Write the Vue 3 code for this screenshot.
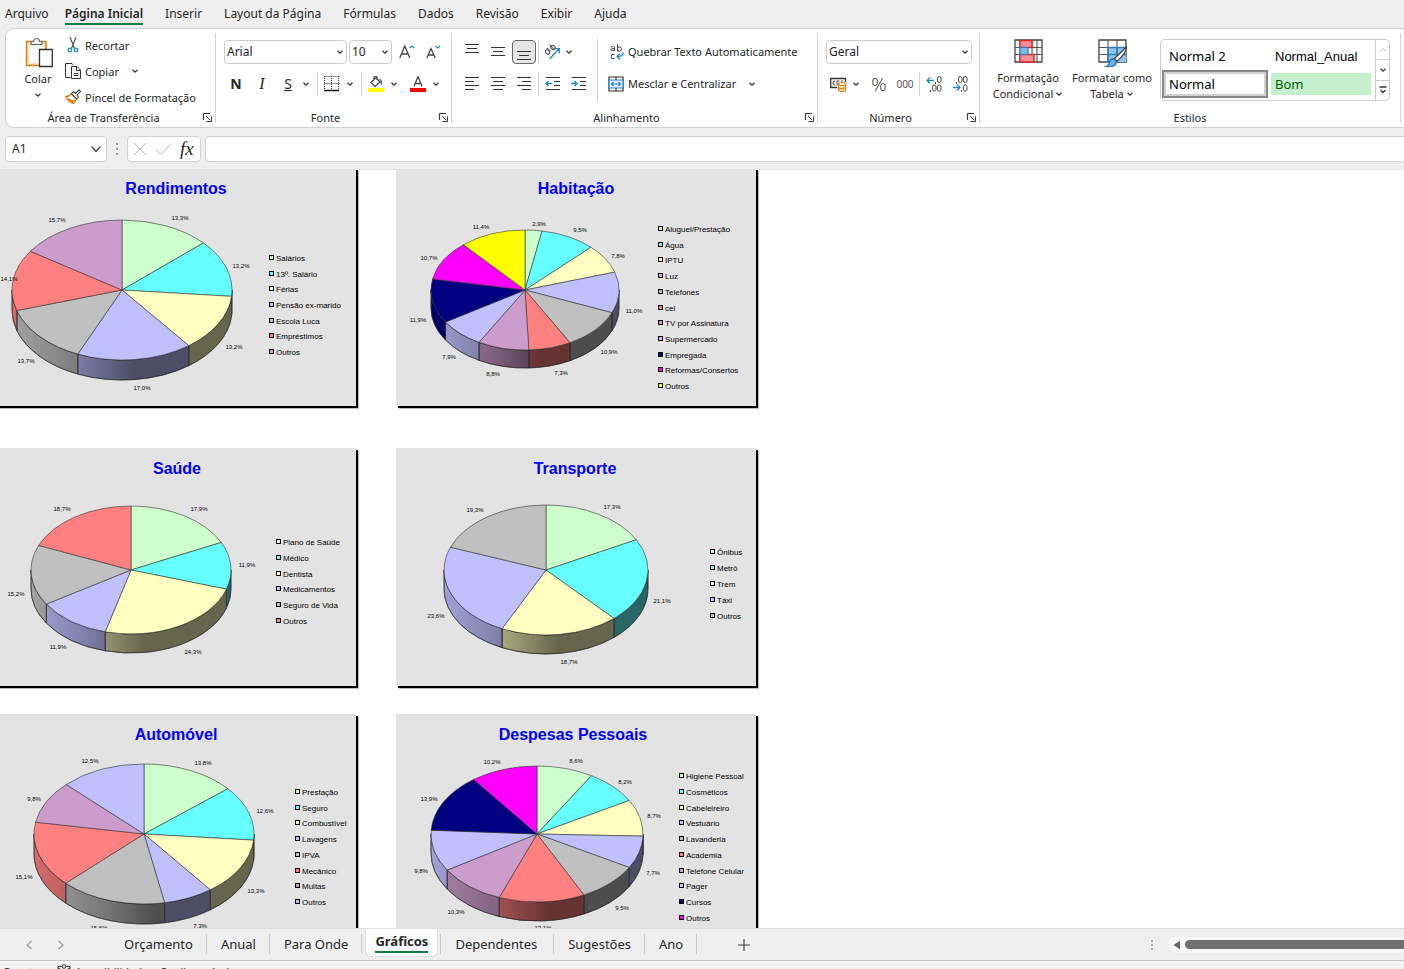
<script setup>
import { ref } from 'vue'

const menu = ['Arquivo', 'Página Inicial', 'Inserir', 'Layout da Página', 'Fórmulas', 'Dados', 'Revisão', 'Exibir', 'Ajuda']
const activeMenu = ref('Página Inicial')

const sheets = ['Orçamento', 'Anual', 'Para Onde', 'Gráficos', 'Dependentes', 'Sugestões', 'Ano']
const activeSheet = ref('Gráficos')

const fontName = ref('Arial')
const fontSize = ref('10')
const numberFormat = ref('Geral')
const cellRef = ref('A1')
const formula = ref('')

const GREEN = '#ccffcc'
const CYAN = '#66ffff'
const CREAM = '#ffffc0'
const LILAC = '#c0c0ff'
const GRAY = '#c0c0c0'
const RED = '#ff8080'
const PLUM = '#cc9ccc'
const NAVY = '#000080'
const PINK = '#ff00ff'
const YELLOW = '#ffff00'

// Slices: [name, percent, colour, label x, label y], in sheet coordinates.
const charts = [
  {
    id: 'rend', title: 'Rendimentos', x: -4, y: 168, tx: 176,
    cx: 122, cy: 290, rx: 110, ry: 70, depth: 20, lx: 269, ly: 258, lspan: 94,
    slices: [
      ['Salários', 13.3, GREEN, 180, 218], ['13º. Salário', 13.2, CYAN, 241, 266],
      ['Férias', 13.2, CREAM, 234, 347], ['Pensão ex-marido', 17.0, LILAC, 142, 388],
      ['Escola Luca', 13.7, GRAY, 26, 361], ['Empréstimos', 14.1, RED, 9, 279],
      ['Outros', 15.7, PLUM, 57, 220],
    ],
  },
  {
    id: 'hab', title: 'Habitação', x: 396, y: 168, tx: 576,
    cx: 525, cy: 290, rx: 94, ry: 60, depth: 18, lx: 658, ly: 229, lspan: 157,
    slices: [
      ['Aluguel/Prestação', 2.9, GREEN, 539, 224], ['Água', 9.5, CYAN, 580, 230],
      ['IPTU', 7.8, CREAM, 618, 256], ['Luz', 11.0, LILAC, 634, 311],
      ['Telefones', 10.9, GRAY, 609, 352], ['cel', 7.3, RED, 561, 373],
      ['TV por Assinatura', 8.8, PLUM, 493, 374], ['Supermercado', 7.9, LILAC, 449, 357],
      ['Empregada', 11.9, NAVY, 418, 320], ['Reformas/Consertos', 10.7, PINK, 429, 258],
      ['Outros', 11.4, YELLOW, 481, 227],
    ],
  },
  {
    id: 'sau', title: 'Saúde', x: -4, y: 448, tx: 177,
    cx: 131, cy: 570, rx: 100, ry: 64, depth: 19, lx: 276, ly: 542, lspan: 79,
    slices: [
      ['Plano de Saúde', 17.9, GREEN, 199, 509], ['Médico', 11.9, CYAN, 247, 565],
      ['Dentista', 24.3, CREAM, 193, 652], ['Medicamentos', 11.9, LILAC, 58, 647],
      ['Seguro de Vida', 15.2, GRAY, 16, 594], ['Outros', 18.7, RED, 62, 509],
    ],
  },
  {
    id: 'tra', title: 'Transporte', x: 396, y: 448, tx: 575,
    cx: 546, cy: 570, rx: 102, ry: 65, depth: 19, lx: 710, ly: 552, lspan: 64,
    slices: [
      ['Ônibus', 17.3, GREEN, 612, 507], ['Metrô', 21.1, CYAN, 662, 601],
      ['Trem', 18.7, CREAM, 569, 662], ['Táxi', 23.6, LILAC, 436, 616],
      ['Outros', 19.3, GRAY, 475, 510],
    ],
  },
  {
    id: 'aut', title: 'Automóvel', x: -4, y: 714, tx: 176,
    cx: 144, cy: 834, rx: 110, ry: 70, depth: 20, lx: 295, ly: 792, lspan: 110,
    slices: [
      ['Prestação', 13.8, GREEN, 203, 763], ['Seguro', 12.6, CYAN, 265, 811],
      ['Combustível', 13.3, CREAM, 256, 891], ['Lavagens', 7.3, LILAC, 200, 926],
      ['IPVA', 15.6, GRAY, 99, 928], ['Mecânico', 15.1, RED, 24, 877],
      ['Multas', 9.8, PLUM, 34, 799], ['Outros', 12.5, LILAC, 90, 761],
    ],
  },
  {
    id: 'des', title: 'Despesas Pessoais', x: 396, y: 714, tx: 573,
    cx: 537, cy: 834, rx: 106, ry: 68, depth: 19, lx: 679, ly: 776, lspan: 142,
    slices: [
      ['Higiene Pessoal', 8.6, GREEN, 576, 761], ['Cosméticos', 8.2, CYAN, 625, 782],
      ['Cabeleireiro', 8.7, CREAM, 654, 816], ['Vestuário', 7.7, LILAC, 653, 873],
      ['Lavanderia', 9.5, GRAY, 622, 908], ['Academia', 13.1, RED, 543, 928],
      ['Telefone Celular', 10.3, PLUM, 456, 912], ['Pager', 9.8, LILAC, 421, 871],
      ['Cursos', 13.9, NAVY, 429, 799], ['Outros', 10.2, PINK, 492, 762],
    ],
  },
]

function build(c) {
  const total = c.slices.reduce((s, d) => s + d[1], 0)
  const at = (a) => [c.cx + c.rx * Math.sin(a), c.cy - c.ry * Math.cos(a)]
  let acc = 0
  const parts = c.slices.map(([name, pct, fill, x, y], i) => {
    const a0 = (acc / total) * 2 * Math.PI
    acc += pct
    const a1 = (acc / total) * 2 * Math.PI
    const [x0, y0] = at(a0)
    const [x1, y1] = at(a1)
    const top = `M${c.cx} ${c.cy}L${x0} ${y0}A${c.rx} ${c.ry} 0 ${a1 - a0 > Math.PI ? 1 : 0} 1 ${x1} ${y1}Z`
    const w0 = Math.max(a0, Math.PI / 2)
    const w1 = Math.min(a1, Math.PI * 1.5)
    let wall = ''
    if (w1 > w0) {
      const [p, q] = at(w0)
      const [r, s] = at(w1)
      wall = `M${p} ${q}A${c.rx} ${c.ry} 0 0 1 ${r} ${s}V${s + c.depth}A${c.rx} ${c.ry} 0 0 0 ${p} ${q + c.depth}Z`
    }
    return {
      name, fill, x, y, top, wall,
      label: pct.toFixed(1).replace('.', ',') + '%',
      keyY: Math.round(c.ly + (c.lspan * i) / (c.slices.length - 1)),
    }
  })
  return { ...c, parts }
}
const rows = [[0, 1], [2, 3], [4, 5]].map((r) => r.map((i) => build(charts[i])))
</script>

<template>
  <div class="app">
    <svg class="defs" aria-hidden="true">
      <symbol id="chev" viewBox="0 0 8 8"><path d="M1.5 2.8L4 5.2L6.5 2.8" fill="none" stroke="#333" stroke-width="1.3" /></symbol>
      <symbol id="launch" viewBox="0 0 9 9"><path d="M.5 7V.5H7M3 3L7 7M8.500 3.500V8.500H3.500" fill="none" stroke="#333" /></symbol>
    </svg>

    <nav class="menu">
      <button v-for="m in menu" :key="m" type="button" :class="{ on: m === activeMenu }" @click="activeMenu = m">{{ m }}</button>
    </nav>

    <section class="ribbon">
      <div class="group clip">
        <div class="body">
          <button type="button" class="big paste">
            <svg width="30" height="32" viewBox="0 0 30 32">
              <path d="M3.500 5.500H23V29.500H3.500Z" fill="#fbe3b5" stroke="#e07a10" stroke-width="1.400" />
              <path d="M6 8H21V27H6Z" fill="#fafafa" />
              <path d="M8 8.500V5.500H10.500A3 3 0 0 1 16.500 5.500H19V8.500Z" fill="#fff" stroke="#666" stroke-width="1.200" />
              <path d="M16.500 13.500H29.300V30.500H16.500Z" fill="#fff" stroke="#333" stroke-width="1.300" />
            </svg>
            <span>Colar</span>
            <svg class="chev"><use href="#chev" /></svg>
          </button>
          <div class="stack">
            <button type="button" class="cmd">
              <svg width="16" height="16" viewBox="0 0 16 16" fill="none">
                <path d="M5 0L9.500 11.500M11 0L6.500 11.500" stroke="#555" stroke-width="1.200" />
                <circle cx="5" cy="13" r="1.800" stroke="#1e86d0" stroke-width="1.300" /><circle cx="11" cy="13" r="1.800" stroke="#1e86d0" stroke-width="1.300" />
              </svg>Recortar
            </button>
            <button type="button" class="cmd">
              <svg width="16" height="16" viewBox="0 0 16 16" fill="none" stroke="#333">
                <path d="M5.500 14.500H.500V.500H7L8.500 2" /><path d="M6.500 3.500H12L15.500 7V15.500H6.500ZM11.500 3.500V7.500H15.500M9 10.500H13.500M9 12.500H13.500" />
              </svg>Copiar<svg class="chev far"><use href="#chev" /></svg>
            </button>
            <button type="button" class="cmd">
              <svg width="16" height="16" viewBox="0 0 16 16">
                <path d="M.800 7.500Q4 7.500 6.500 5L11.500 10L8.500 14.300Q3 13 .800 7.500Z" fill="#fff" stroke="#e07a10" stroke-width="1.300" /><path d="M2.500 10L9.800 12L8.300 14Q5 13.500 2.500 10Z" fill="#f5a04a" stroke="#e07a10" />
                <path d="M6.500 4.500L8.500 2.500L10.500 4.500L14 .800L15.500 2.300L12 6L13.500 8L11.500 10Z" fill="#fff" stroke="#444" stroke-width="1.100" />
              </svg>Pincel de Formatação
            </button>
          </div>
        </div>
        <div class="foot"><span>Área de Transferência</span><button type="button" aria-label="Abrir Área de Transferência"><svg width="9" height="9"><use href="#launch" /></svg></button></div>
      </div>

      <div class="group font">
        <div class="body col">
          <div class="row">
            <span class="pick wide"><select v-model="fontName" aria-label="Fonte"><option>Arial</option></select><svg class="chev"><use href="#chev" /></svg></span>
            <span class="pick size"><select v-model="fontSize" aria-label="Tamanho da fonte"><option>10</option></select><svg class="chev"><use href="#chev" /></svg></span>
            <button type="button" class="ic grow" aria-label="Aumentar fonte">
              <svg width="16" height="16" viewBox="0 0 16 16" fill="none"><path d="M.800 14L5.800 2L10.800 14M2.600 10H9" stroke="#444" stroke-width="1.300" /><path d="M10.500 4L12.800 2L15 4" stroke="#1e86d0" stroke-width="1.300" /></svg>
            </button>
            <button type="button" class="ic" aria-label="Diminuir fonte">
              <svg width="16" height="16" viewBox="0 0 16 16" fill="none"><path d="M1.800 14L6 4.500L10.200 14M3.200 11H8.800" stroke="#444" stroke-width="1.300" /><path d="M10.500 2L12.800 4L15 2" stroke="#1e86d0" stroke-width="1.300" /></svg>
            </button>
          </div>
          <div class="row">
            <button type="button" class="ic bold">N</button>
            <button type="button" class="ic italic">I</button>
            <button type="button" class="ic under">S</button>
            <svg class="chev gap"><use href="#chev" /></svg>
            <i class="bar"></i>
            <button type="button" class="ic" aria-label="Bordas">
              <svg width="16" height="16" viewBox="0 0 16 16"><path d="M.500 .500H15.500M.500 7.500H15.500M.500 0V13M7.500 0V13M14.500 0V13" stroke="#333" stroke-dasharray="1 1" /><path d="M0 14.500H15" stroke="#000" stroke-width="1.400" /></svg>
            </button>
            <svg class="chev gap"><use href="#chev" /></svg>
            <i class="bar"></i>
            <button type="button" class="ic" aria-label="Cor de preenchimento">
              <svg width="16" height="16" viewBox="0 0 16 16"><path d="M0 12H16V16H0Z" fill="#ff0" /><path d="M3 6.500L8 1.500L12 6L7 10.500ZM6 3.500V1.500A1.500 1.500 0 0 1 9 1.500V4" fill="#fff" stroke="#444" stroke-width="1.200" /><path d="M11 2.500Q15 2.500 14 9.500Q11.500 7 12.500 5Z" fill="#1e6fb8" /></svg>
            </button>
            <svg class="chev gap"><use href="#chev" /></svg>
            <button type="button" class="ic" aria-label="Cor da fonte">
              <svg width="16" height="16" viewBox="0 0 16 16"><path d="M0 12H16V16H0Z" fill="#f00" /><path d="M4 10.500L8 .500L12 10.500M5.500 7.500H10.500" fill="none" stroke="#444" stroke-width="1.300" /></svg>
            </button>
            <svg class="chev gap"><use href="#chev" /></svg>
          </div>
        </div>
        <div class="foot"><span>Fonte</span><button type="button" aria-label="Abrir Fonte"><svg width="9" height="9"><use href="#launch" /></svg></button></div>
      </div>

      <div class="group align">
        <div class="body">
          <div class="col">
            <div class="row">
              <button type="button" class="ic" aria-label="Alinhar em cima"><svg width="14" height="16" viewBox="0 0 14 16"><path d="M0 .500H14M2 4.500H12M0 8.500H14" stroke="#333" /></svg></button>
              <button type="button" class="ic" aria-label="Alinhar no meio"><svg width="14" height="16" viewBox="0 0 14 16"><path d="M0 3.500H14M2 7.500H12M0 11.500H14" stroke="#333" /></svg></button>
              <button type="button" class="ic pressed" aria-label="Alinhar embaixo"><svg width="14" height="16" viewBox="0 0 14 16"><path d="M0 7.500H14M2 11.500H12M0 15.500H14" stroke="#333" /></svg></button>
              <i class="bar"></i>
              <button type="button" class="ic" aria-label="Orientação">
                <svg width="16" height="16" viewBox="0 0 16 16" fill="none"><g stroke="#444"><ellipse cx="3.500" cy="8" rx="1.800" ry="2.300" transform="rotate(-45 3.500 8)" /><path d="M2.500 4.500Q4 4 5 5.500L6.800 7.500M5.500 .500L10 5.500" /><ellipse cx="9" cy="3.500" rx="1.800" ry="2.300" transform="rotate(-45 9 3.500)" /></g><path d="M5.500 15L15 5M10.500 4.700H15.300V9.500" stroke="#1e86d0" stroke-width="1.300" /></svg>
              </button>
              <svg class="chev"><use href="#chev" /></svg>
            </div>
            <div class="row">
              <button type="button" class="ic" aria-label="Alinhar à esquerda"><svg width="14" height="14" viewBox="0 0 14 14"><path d="M0 .500H14M0 4.500H9M0 8.500H14M0 12.500H9" stroke="#333" /></svg></button>
              <button type="button" class="ic" aria-label="Centralizar"><svg width="14" height="14" viewBox="0 0 14 14"><path d="M0 .500H14M2 4.500H12M0 8.500H14M2 12.500H12" stroke="#333" /></svg></button>
              <button type="button" class="ic" aria-label="Alinhar à direita"><svg width="14" height="14" viewBox="0 0 14 14"><path d="M0 .500H14M5 4.500H14M0 8.500H14M5 12.500H14" stroke="#333" /></svg></button>
              <i class="bar"></i>
              <button type="button" class="ic" aria-label="Diminuir recuo"><svg width="15" height="14" viewBox="0 0 15 14" fill="none"><path d="M1 .500H15M9 4.500H15M9 8.500H15M1 12.500H15" stroke="#333" /><path d="M7 6.500H1M3.500 4L1 6.500L3.500 9" stroke="#1e86d0" stroke-width="1.400" /></svg></button>
              <button type="button" class="ic" aria-label="Aumentar recuo"><svg width="15" height="14" viewBox="0 0 15 14" fill="none"><path d="M1 .500H15M9 4.500H15M9 8.500H15M1 12.500H15" stroke="#333" /><path d="M0 6.500H6M3.500 4L6 6.500L3.500 9" stroke="#1e86d0" stroke-width="1.400" /></svg></button>
            </div>
          </div>
          <i class="bar tall"></i>
          <div class="col">
            <div class="row">
              <button type="button" class="cmd">
                <svg width="16" height="16" viewBox="0 0 16 16" fill="none"><g stroke="#444"><path d="M3 3Q6.500 1.300 6.500 4V7M6.500 4.500Q2.500 4.300 2.700 5.900Q3.500 7.800 6.500 5.800" /><path d="M9.500 0V7.500" /><ellipse cx="11.500" cy="5" rx="2" ry="2.200" /><path d="M6.500 10.500Q3 9.500 3 12.500Q3 15.500 6.500 14.500" /></g><path d="M15 8.500Q15.500 12.500 9.500 12.500M12 9.800L9.200 12.500L12 15.300" stroke="#1e86d0" stroke-width="1.500" /></svg>Quebrar Texto Automaticamente
              </button>
            </div>
            <div class="row">
              <button type="button" class="cmd">
                <svg width="16" height="16" viewBox="0 0 16 16" fill="none"><path d="M1 1H15V15H1ZM8 1V4M8 12V15" stroke="#333" stroke-width="1.200" /><path d="M1 4H15V12H1Z" fill="#e3f1fb" stroke="#1e86d0" stroke-width="1.200" /><path d="M3.500 8H12.500M5.500 6L3.500 8L5.500 10M10.500 6L12.500 8L10.500 10" stroke="#1e86d0" stroke-width="1.200" /></svg>Mesclar e Centralizar<svg class="chev far"><use href="#chev" /></svg>
              </button>
            </div>
          </div>
        </div>
        <div class="foot"><span>Alinhamento</span><button type="button" aria-label="Abrir Alinhamento"><svg width="9" height="9"><use href="#launch" /></svg></button></div>
      </div>

      <div class="group num">
        <div class="body col">
          <div class="row">
            <span class="pick full"><select v-model="numberFormat" aria-label="Formato de número"><option>Geral</option></select><svg class="chev"><use href="#chev" /></svg></span>
          </div>
          <div class="row">
            <button type="button" class="ic" aria-label="Formato contábil">
              <svg width="17" height="16" viewBox="0 0 17 16" fill="none"><path d="M7 11.500H.700V2.500H15.500V6" stroke="#333" stroke-width="1.300" /><path d="M5.500 5Q3 4.500 3 7Q3 9.500 5.500 9M7 9.500V5H9.500M11 5H13" stroke="#444" /><path d="M8.500 8V14A3.500 1.500 0 0 0 15.500 14V8Z" fill="#fbe3b5" stroke="#e07a10" stroke-width="1.200" /><ellipse cx="12" cy="8" rx="3.500" ry="1.500" fill="#fff" stroke="#e07a10" stroke-width="1.200" /><path d="M8.500 11A3.500 1.500 0 0 0 15.500 11" stroke="#e07a10" stroke-width="1.200" /></svg>
            </button>
            <svg class="chev"><use href="#chev" /></svg>
            <button type="button" class="ic pct">%</button>
            <button type="button" class="ic ooo">000</button>
            <i class="bar"></i>
            <button type="button" class="ic" aria-label="Aumentar casas decimais">
              <svg width="16" height="16" viewBox="0 0 16 16" fill="none"><path d="M8 4.500H1M4 1.500L1 4.500L4 7.500" stroke="#1e86d0" stroke-width="1.300" /><g stroke="#444"><rect x="11.500" y=".500" width="3.500" height="6" rx="1.700" /><rect x="6.500" y="9" width="3.500" height="6" rx="1.700" /><rect x="11.500" y="9" width="3.500" height="6" rx="1.700" /><path d="M9.500 6V8M4.500 14V16" /></g></svg>
            </button>
            <button type="button" class="ic" aria-label="Diminuir casas decimais">
              <svg width="16" height="16" viewBox="0 0 16 16" fill="none"><path d="M1 11.500H8M5 8.500L8 11.500L5 14.500" stroke="#1e86d0" stroke-width="1.300" /><g stroke="#444"><rect x="11.500" y=".500" width="3.500" height="6" rx="1.700" /><rect x="6.500" y=".500" width="3.500" height="6" rx="1.700" /><rect x="11.500" y="9" width="3.500" height="6" rx="1.700" /><path d="M4.500 6V8M9.500 14V16" /></g></svg>
            </button>
          </div>
        </div>
        <div class="foot"><span>Número</span><button type="button" aria-label="Abrir Número"><svg width="9" height="9"><use href="#launch" /></svg></button></div>
      </div>

      <div class="group styles">
        <div class="body">
          <button type="button" class="big">
            <svg width="30" height="30" viewBox="0 0 30 30"><path d="M2 3H29V25H2Z" fill="#fff" stroke="#444" stroke-width="1.300" /><path d="M2 10.500H29M2 17.500H29M7 3V25M19 3V25M24 3V25" stroke="#555" stroke-width="1.100" /><path d="M7 3.500H19V10.500H7ZM7 17.500H21V25H7Z" fill="#ff8f95" stroke="#d8262c" stroke-width="1.400" /><path d="M7 10.500H15V17.500H7Z" fill="#7fb8ea" stroke="#2a7cc4" stroke-width="1.200" /></svg>
            <span>Formatação</span><span>Condicional<svg class="chev"><use href="#chev" /></svg></span>
          </button>
          <button type="button" class="big">
            <svg width="30" height="30" viewBox="0 0 30 30"><path d="M2 3H29V25H2Z" fill="#fff" stroke="#444" stroke-width="1.300" /><path d="M11 10.500H29V25H11Z" fill="#8cc3f0" /><path d="M2 10.500H29M2 17.500H29M11 3V25M20 3V25" stroke="#555" stroke-width="1.100" /><path d="M11 25V10.500H29M11 17.500H29M20 10.500V25H11" fill="none" stroke="#2a7cc4" stroke-width="1.300" /><path d="M29.800 9.500L17 22L19.500 24.500Q28 18 29.800 10Z" fill="#fff" stroke="#444" stroke-width="1.200" /><path d="M9 29.500Q12 28.500 12.500 25Q14 20.500 18 22.500Q21 25 17.500 28.500Q14 30.500 9 29.500Z" fill="#6db1ea" stroke="#1b68ac" stroke-width="1.200" /></svg>
            <span>Formatar como</span><span>Tabela<svg class="chev"><use href="#chev" /></svg></span>
          </button>
          <div class="gallery">
            <div class="cells">
              <button type="button">Normal 2</button>
              <button type="button" class="arial">Normal_Anual</button>
              <button type="button" class="sel">Normal</button>
              <button type="button" class="good">Bom</button>
            </div>
            <div class="scroll">
              <button type="button" aria-label="Linha anterior"><svg width="8" height="8" viewBox="0 0 8 8"><path d="M1 5.500L4 2.500L7 5.500" fill="none" stroke="#bbb" /></svg></button>
              <button type="button" aria-label="Próxima linha"><svg class="chev"><use href="#chev" /></svg></button>
              <button type="button" aria-label="Mais estilos"><svg width="8" height="8" viewBox="0 0 8 8"><path d="M.500 1H7.500M1.500 4L4 6.500L6.500 4" fill="none" stroke="#333" stroke-width="1.300" /></svg></button>
            </div>
          </div>
        </div>
        <div class="foot"><span>Estilos</span></div>
      </div>
    </section>

    <section class="fbar">
      <div class="box name"><input v-model="cellRef" aria-label="Caixa de nome" /><svg width="12" height="12" viewBox="0 0 12 12"><path d="M1.500 3.500L6 8.500L10.500 3.500" fill="none" stroke="#444" stroke-width="1.200" /></svg></div>
      <svg class="dots" width="3" height="12" viewBox="0 0 3 12"><path d="M0 0H2V2H0ZM0 5H2V7H0ZM0 10H2V12H0Z" fill="#999" /></svg>
      <div class="box fx">
        <button type="button" aria-label="Cancelar"><svg width="14" height="14" viewBox="0 0 14 14"><path d="M1 1L13 13M13 1L1 13" stroke="#b5b5b5" /></svg></button>
        <button type="button" aria-label="Inserir"><svg width="17" height="14" viewBox="0 0 17 14"><path d="M1 7.500L6 12.500L16 2" fill="none" stroke="#b5b5b5" /></svg></button>
        <button type="button" class="fxi" aria-label="Inserir função">fx</button>
      </div>
      <input v-model="formula" class="box formula" aria-label="Barra de fórmulas" />
    </section>

    <main class="sheet">
      <div v-for="(row, i) in rows" :key="i" class="charts">
        <svg v-for="c in row" :key="c.id" class="chart" :viewBox="`${c.x} ${c.y} 360 238`" role="img" :aria-label="c.title">
          <defs>
            <linearGradient :id="'g' + c.id" gradientUnits="userSpaceOnUse" :x1="c.cx - c.rx" y1="0" :x2="c.cx + 12" y2="0">
              <stop offset="0" stop-color="#000" stop-opacity="0.160" />
              <stop offset="0.550" stop-color="#000" stop-opacity="0.360" />
              <stop offset="1" stop-color="#000" stop-opacity="0.600" />
            </linearGradient>
          </defs>
          <text class="title" :x="c.tx" :y="c.y + 26">{{ c.title }}</text>
          <g class="edge">
            <template v-for="(p, k) in c.parts" :key="k">
              <path v-if="p.wall" :d="p.wall" :fill="p.fill" />
              <path v-if="p.wall" :d="p.wall" :fill="`url(#g${c.id})`" />
            </template>
            <path v-for="(p, k) in c.parts" :key="'t' + k" :d="p.top" :fill="p.fill" />
          </g>
          <text v-for="(p, k) in c.parts" :key="'l' + k" class="pc" :x="p.x" :y="p.y + 2">{{ p.label }}</text>
          <g v-for="(p, k) in c.parts" :key="'k' + k">
            <rect class="key" :x="c.lx" :y="p.keyY - 3" width="5" height="5" />
            <rect :x="c.lx + 1" :y="p.keyY - 2" width="3" height="3" :fill="p.fill" />
            <text class="kt" :x="c.lx + 7" :y="p.keyY + 3">{{ p.name }}</text>
          </g>
        </svg>
      </div>
    </main>

    <footer class="tabs">
      <button type="button" class="nav" aria-label="Planilha anterior"><svg width="8" height="10" viewBox="0 0 8 10"><path d="M6.500 1L2 5L6.500 9" fill="none" stroke="#999" stroke-width="1.200" /></svg></button>
      <button type="button" class="nav" aria-label="Próxima planilha"><svg width="8" height="10" viewBox="0 0 8 10"><path d="M1.500 1L6 5L1.500 9" fill="none" stroke="#999" stroke-width="1.200" /></svg></button>
      <div class="list">
        <button v-for="s in sheets" :key="s" type="button" :class="{ on: s === activeSheet }" @click="activeSheet = s"><span>{{ s }}</span></button>
      </div>
      <button type="button" class="plus" aria-label="Nova planilha"><svg width="12" height="12" viewBox="0 0 12 12"><path d="M6 0V12M0 6H12" stroke="#444" stroke-width="1.200" /></svg></button>
      <svg class="grip" width="2" height="10" viewBox="0 0 2 10"><path d="M0 0H2V2H0ZM0 4H2V6H0ZM0 8H2V10H0Z" fill="#aaa" /></svg>
      <div class="hscroll"><svg width="8" height="10" viewBox="0 0 8 10"><path d="M.500 5L7 .800V9.200Z" fill="#666" /></svg><i></i></div>
    </footer>
    <div class="status">
      <span>Pronto</span>
      <svg width="14" height="14" viewBox="0 0 14 14" fill="none" stroke="#333"><circle cx="7" cy="2.500" r="1.800" /><path d="M5 2.500H2.500Q.500 2.500 1 4Q2 5 5 6M9 2.500H11.500Q13.500 2.500 13 4Q12 5 9 6" stroke-width="1.200" /></svg>
      <span>Acessibilidade: não disponível</span>
    </div>
  </div>
</template>

<style>
body { margin: 0; overflow: hidden; }
</style>

<style scoped>
.app { display: flex; flex-direction: column; height: 100vh; overflow: hidden; background: #efefef; color: #262626; font-family: "Noto Sans", "Open Sans", sans-serif; font-size: 12px; }
.defs { position: absolute; width: 0; height: 0; }
button, input, select { font: inherit; color: inherit; margin: 0; padding: 0; border: 0; background: none; }
button { display: flex; align-items: center; white-space: nowrap; }
svg { display: block; flex: none; }
.chev { width: 8px; height: 8px; }

.menu { display: flex; height: 28px; padding-left: 5px; gap: 22px; flex: none; }
.menu button { height: 25px; padding-top: 3px; box-sizing: border-box; border-bottom: 2px solid transparent; }
.menu button:first-child { margin-right: -6px; }
.menu .on { font-weight: 600; border-color: #107c41; }

.ribbon { display: flex; flex: none; height: 98px; margin: 0 -12px 0 5px; background: #fff; border: 1px solid #d2d2d2; border-radius: 9px; }
.group { display: flex; flex-direction: column; flex: none; box-sizing: border-box; margin: 4px 0; border-right: 1px solid #d2d2d2; }
.clip { width: 210px; }
.clip .foot { padding-left: 2px; }
.font { width: 236px; }
.align { width: 366px; }
.num { width: 162px; }
.styles { width: 421px; }
.body { display: flex; height: 78px; }
.body.col, .col { display: flex; flex-direction: column; }
.foot { display: flex; align-items: center; height: 12px; }
.foot span { flex: 1; text-align: center; font-size: 11px; line-height: 12px; padding-top: 2px; }
.foot button { width: 16px; height: 16px; padding-left: 4px; box-sizing: border-box; }
.row { display: flex; align-items: center; height: 32px; padding-top: 5px; box-sizing: border-box; }
.ic { justify-content: center; width: 26px; height: 24px; box-sizing: border-box; }
.bar { width: 1px; height: 24px; background: #d2d2d2; }
.tall { height: 62px; margin: 6px 10px 0 6px; }
.big { flex-direction: column; line-height: 16px; font-size: 11px; }
.big span { display: flex; align-items: center; gap: 2px; }
.paste { width: 52px; margin-left: 6px; padding-top: 3px; }
.paste span { margin: 3px 0 4px; }
.stack { display: flex; flex-direction: column; margin: -1px 0 0 1px; }
.cmd { height: 26px; gap: 4px; font-size: 11px; }
.far { margin-left: 8px; }

.pick { display: flex; align-items: center; height: 24px; box-sizing: border-box; border: 1px solid #ccc; border-radius: 4px; background: #fff; position: relative; }
.pick select { appearance: none; width: 100%; height: 22px; padding-left: 2px; }
.pick .chev { position: absolute; right: 2px; top: 7px; pointer-events: none; }
.wide { width: 123px; margin-left: 8px; }
.size { width: 43px; margin-left: 2px; }
.full { width: 146px; margin-left: 8px; }
.grow { margin-left: 2px; }
.font .row + .row { padding-left: 7px; }
.font .bar { margin-right: 1px; }
.gap { margin: 0 7px 0 1px; }
.bold { font-weight: 700; font-size: 14px; }
.italic { font-family: "Liberation Serif", serif; font-style: italic; font-size: 16px; }
.under { text-decoration: underline; font-size: 14px; }
.align .row { padding-left: 7px; }
.align .row .bar { margin-left: 1px; }
.align .bar + .col .row { padding-left: 0; }
.pressed { width: 24px; margin: 0 1px; background: #e6e6e6; border: 1px solid #666; border-radius: 4px; }
.num .row + .row { padding-left: 7px; }
.num .chev { margin-left: 1px; }
.num .bar { margin: 0 1px; }
.num .chev + .pct { margin-left: 6px; }
.pct { font-family: "Open Sans", sans-serif; font-weight: 300; font-size: 19px; }
.ooo { font-size: 10px; color: #555; }

.styles .big { width: 84px; padding-top: 4px; }
.styles .big span:first-of-type { margin-top: 3px; }
.styles .big:first-child { margin-left: 6px; }
.gallery { display: flex; width: 230px; height: 62px; margin: 6px 0 0 6px; box-sizing: border-box; border: 1px solid #ccc; border-radius: 5px; }
.cells { display: grid; grid-template-columns: 106px 100px; grid-template-rows: 28px 28px; column-gap: 3px; padding: 2px 4px 0 1px; }
.cells button { padding-left: 7px; font-size: 13px; color: #000; box-sizing: border-box; }
.cells button:nth-child(even) { padding-left: 4px; }
.cells .arial { font-family: "Liberation Sans", sans-serif; }
.cells .sel { border: 2px solid #888; box-shadow: inset 0 0 0 2px #d0d0d0; padding-left: 5px; }
.cells .good { background: #c6efce; color: #006100; height: 22px; margin-top: 3px; }
.scroll { flex: 1; display: flex; flex-direction: column; border-left: 1px solid #ccc; }
.scroll button { flex: 1; justify-content: center; }
.scroll button + button { border-top: 1px solid #ccc; }

.fbar { display: flex; flex: none; align-items: center; height: 42px; padding-left: 5px; border-bottom: 1px solid #e0e0e0; box-sizing: border-box; }
.box { height: 26px; box-sizing: border-box; background: #fff; border: 1px solid #d2d2d2; border-radius: 4px; }
.name { display: flex; align-items: center; width: 102px; padding: 0 4px 0 6px; }
.name input { flex: 1; min-width: 0; }
.dots { margin: 0 8px 0 9px; }
.fx { display: flex; align-items: center; width: 74px; padding-left: 5px; gap: 8px; }
.fxi { font-family: "Liberation Serif", serif; font-style: italic; font-size: 19px; }
.formula { flex: 1; min-width: 0; margin: 0 -8px 0 4px; padding: 0 8px; }

.sheet { flex: 1; min-height: 0; overflow: hidden; background: #fff; }
.charts { display: flex; gap: 40px; margin: 0 0 42px -4px; }
.charts:first-child { margin-top: -2px; }
.charts:nth-child(2) { margin-bottom: 28px; }
.chart { width: 360px; height: 238px; background: #e3e3e3; box-shadow: 2px 2px 0 #000, 3px 3px 0 #bbb; font-family: "Liberation Sans", sans-serif; }
.title { font-size: 16px; font-weight: 700; fill: #00f; text-anchor: middle; }
.edge path { stroke: #333; stroke-width: 0.600; stroke-linejoin: round; }
.pc { font-size: 6px; text-anchor: middle; fill: #000; }
.key { fill: #000; }
.kt { font-size: 8px; fill: #000; }

.tabs { display: flex; flex: none; align-items: center; height: 32px; background: #efefef; border-top: 1px solid #ddd; box-sizing: border-box; }
.nav { justify-content: center; width: 32px; height: 24px; }
.nav:first-child { margin-left: 13px; }
.list { display: flex; align-self: flex-start; align-items: center; height: 30px; margin-left: 33px; }
.list button { padding: 0 13px 0 14px; height: 20px; font-size: 13px; border-right: 1px solid #ccc; }
.list .on { align-self: flex-start; height: 27px; margin: 0 3px 0 4px; padding: 0 9px; border: 0; border-radius: 0 0 5px 5px; background: #fff; box-shadow: 0 0 0 1px #e0e0e0; font-weight: 700; }
.list .on span { border-bottom: 2px solid #107c41; line-height: 20px; margin-top: -1px; }
.list .on + button { border-left: 1px solid #ccc; padding-right: 16px; }
.plus { margin-left: 41px; }
.grip { margin: 0 15px 0 auto; }
.hscroll { display: flex; align-items: center; width: 236px; height: 16px; padding-left: 5px; box-sizing: border-box; gap: 4px; background: #f6f6f6; border-radius: 8px 0 0 8px; }
.hscroll i { flex: 1; height: 9px; border-radius: 5px 0 0 5px; background: #707070; }
.status { display: flex; flex: none; gap: 4px; height: 9px; overflow: hidden; padding: 3px 0 0 4px; box-sizing: border-box; background: #f3f3f3; border-top: 1px solid #c4c4c4; font-size: 11px; line-height: 15px; }
.status svg { margin-left: 14px; }
</style>
